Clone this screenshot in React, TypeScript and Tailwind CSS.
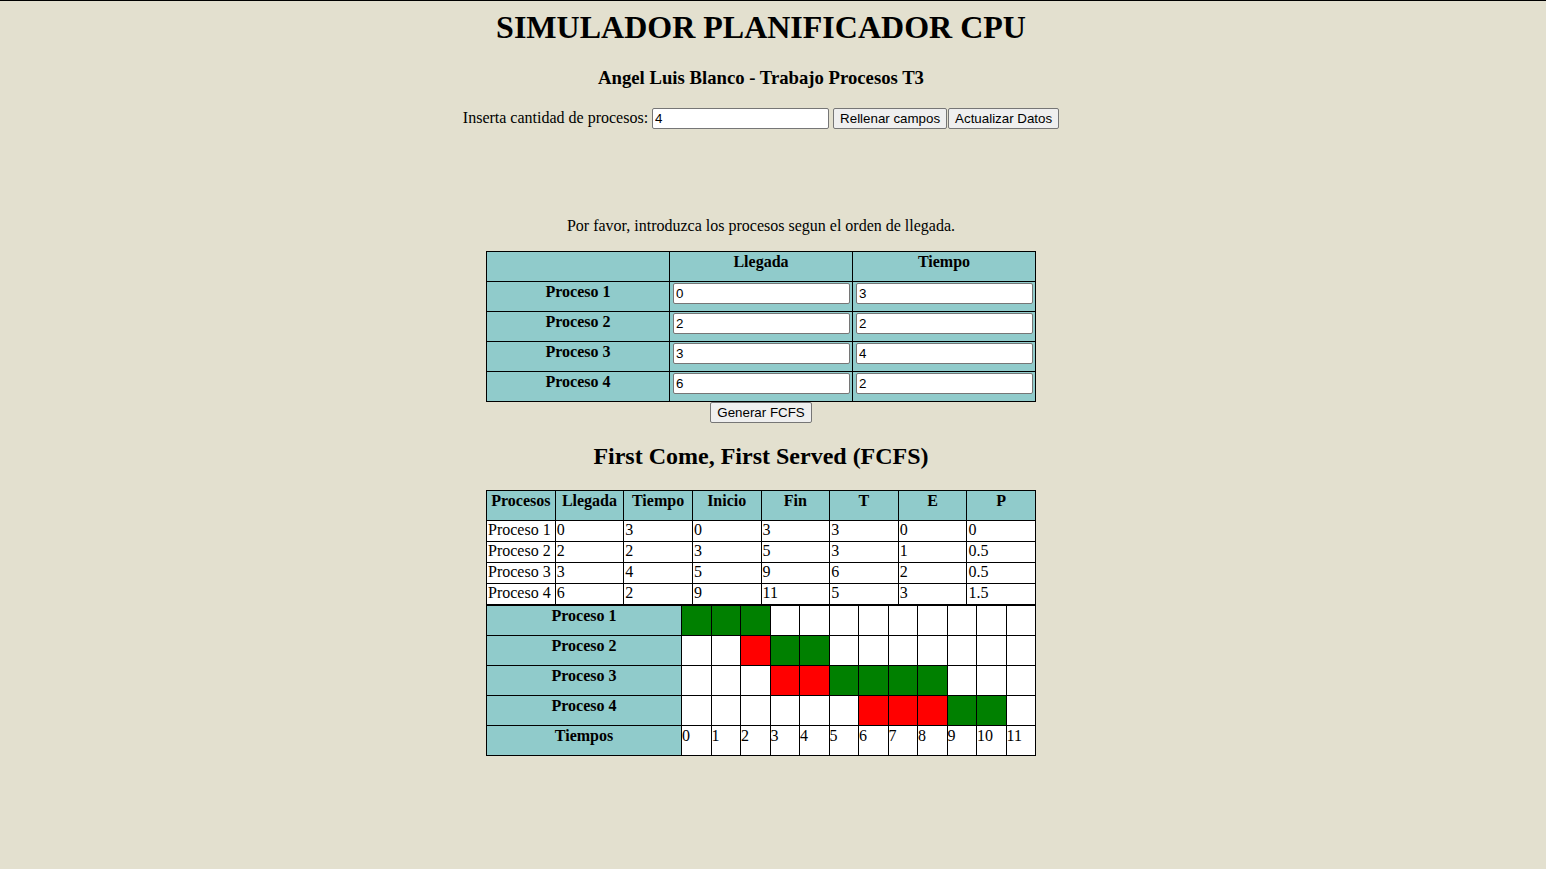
import React from "react";

const procesos = [
  { n: "Proceso 1", l: "0", t: "3", i: "0", f: "3", T: "3", E: "0", P: "0" },
  { n: "Proceso 2", l: "2", t: "2", i: "3", f: "5", T: "3", E: "1", P: "0.5" },
  { n: "Proceso 3", l: "3", t: "4", i: "5", f: "9", T: "6", E: "2", P: "0.5" },
  { n: "Proceso 4", l: "6", t: "2", i: "9", f: "11", T: "5", E: "3", P: "1.5" },
];

const gantt = [
  "GGG_________",
  "__RGG_______",
  "___RRGGGG___",
  "______RRRGG_",
];

function Input({ value, className = "" }: { value: string; className?: string }) {
  return (
    <input
      readOnly
      value={value}
      className={
        "box-border h-[21px] w-[177px] rounded-[2px] border border-[#767676] bg-white px-[2px] py-[1px] font-['Liberation_Sans',Arial,sans-serif] text-[13.33px] leading-[15px] text-black outline-none " +
        className
      }
    />
  );
}

function Button({ children, className = "" }: { children: React.ReactNode; className?: string }) {
  return (
    <button
      className={
        "box-border h-[21px] rounded-[2px] border border-[#767676] bg-[#efefef] px-[6px] py-[1px] font-['Liberation_Sans',Arial,sans-serif] text-[13.33px] leading-[15px] text-black " +
        className
      }
    >
      {children}
    </button>
  );
}

export default function App() {
  const cell = "border border-black p-[1px] align-top leading-[18px]";
  return (
    <div className="min-h-[869px] border-t border-black bg-[#e3e0cf] font-['Liberation_Serif','Times_New_Roman',serif] text-[16px] leading-[18px] text-black">
      <div className="flex w-[1522px] flex-col items-center">
        <h1 className="mt-[8px] text-[32px] font-bold leading-[37px]">SIMULADOR PLANIFICADOR CPU</h1>
        <h3 className="mt-[21px] text-[18.72px] font-bold leading-[21.5px]">
          Angel Luis Blanco - Trabajo Procesos T3
        </h3>
        <div className="mt-[19px] flex items-baseline">
          <span className="leading-[18px]">Inserta cantidad de procesos:</span>
          <Input value="4" className="ml-[4px]" />
          <Button className="ml-[4px] px-[6.5px]">Rellenar campos</Button>
          <Button className="ml-[1px] px-[6.5px]">Actualizar Datos</Button>
        </div>

        <p className="mt-[88px] leading-[18px]">Por favor, introduzca los procesos segun el orden de llegada.</p>

        <table className="mt-[16px] w-[550px] table-fixed border-collapse bg-[#90cbcb]">
          <thead>
            <tr className="h-[30px]">
              <th className={cell}></th>
              <th className={cell + " text-center font-bold"}>Llegada</th>
              <th className={cell + " text-center font-bold"}>Tiempo</th>
            </tr>
          </thead>
          <tbody>
            {procesos.map((p) => (
              <tr key={p.n} className="h-[30px]">
                <th className={cell + " text-center font-bold"}>{p.n}</th>
                <td className={cell + " pl-[3px]"}>
                  <Input value={p.l} className="block" />
                </td>
                <td className={cell + " pl-[3px]"}>
                  <Input value={p.t} className="block" />
                </td>
              </tr>
            ))}
          </tbody>
        </table>
        <Button>Generar FCFS</Button>

        <h2 className="mt-[20px] text-[24px] font-bold leading-[27.5px]">First Come, First Served (FCFS)</h2>

        <table className="mt-[20px] w-[550px] table-fixed border-collapse">
          <thead>
            <tr className="h-[30px] bg-[#90cbcb]">
              {["Procesos", "Llegada", "Tiempo", "Inicio", "Fin", "T", "E", "P"].map((h) => (
                <th key={h} className={cell + " px-0 text-center font-bold whitespace-nowrap"}>
                  {h}
                </th>
              ))}
            </tr>
          </thead>
          <tbody className="bg-white">
            {procesos.map((p) => (
              <tr key={p.n} className="h-[21px]">
                {[p.n, p.l, p.t, p.i, p.f, p.T, p.E, p.P].map((v, k) => (
                  <td key={k} className={cell + " py-0 whitespace-nowrap text-left"}>
                    {v}
                  </td>
                ))}
              </tr>
            ))}
          </tbody>
        </table>

        <table className="w-[550px] table-fixed border-collapse">
          <colgroup>
            <col className="w-[195px]" />
            {Array.from({ length: 12 }).map((_, i) => (
              <col key={i} />
            ))}
          </colgroup>
          <tbody>
            {gantt.map((row, r) => (
              <tr key={r} className="h-[30px]">
                <th className={cell + " bg-[#90cbcb] text-center font-bold"}>Proceso {r + 1}</th>
                {row.split("").map((c, i) => (
                  <td
                    key={i}
                    className={
                      cell +
                      (c === "G" ? " bg-[#008000]" : c === "R" ? " bg-[#ff0000]" : " bg-white")
                    }
                  ></td>
                ))}
              </tr>
            ))}
            <tr className="h-[30px]">
              <th className={cell + " bg-[#90cbcb] text-center font-bold"}>Tiempos</th>
              {Array.from({ length: 12 }).map((_, i) => (
                <td key={i} className={cell + " bg-white px-0 text-left"}>
                  {i}
                </td>
              ))}
            </tr>
          </tbody>
        </table>
      </div>
    </div>
  );
}
